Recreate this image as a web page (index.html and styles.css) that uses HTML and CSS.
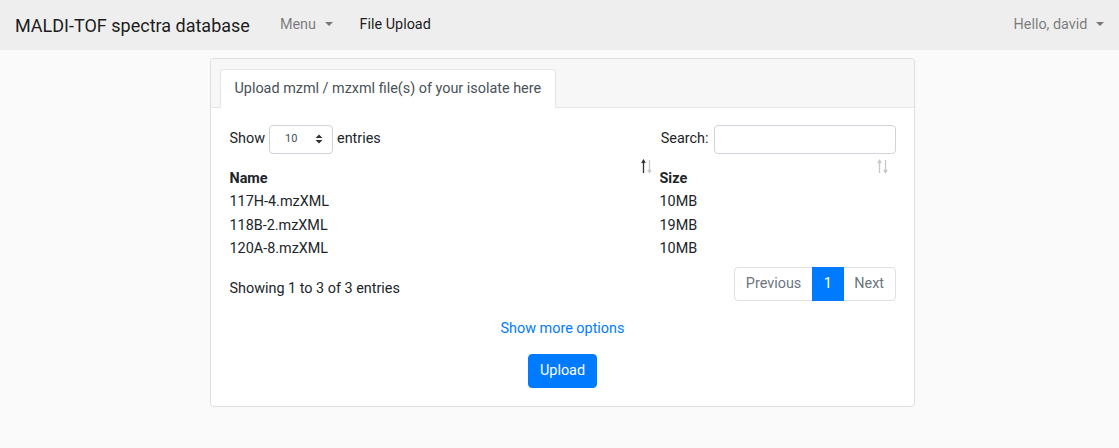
FILE: index.html
```html
<!DOCTYPE html>
<html>
<head>
<meta charset="utf-8">
<link rel="stylesheet" href="styles.css">
</head>
<body>
<nav class="navbar">
  <div class="brand">MALDI-TOF spectra database</div>
  <div class="nav-link muted dropdown">Menu <span class="caret"></span></div>
  <div class="nav-link active">File Upload</div>
  <div class="spacer"></div>
  <div class="nav-link muted dropdown">Hello, david <span class="caret"></span></div>
</nav>
<main class="wrap">
  <section class="card">
    <div class="card-header">
      <div class="tab">Upload mzml / mzxml file(s) of your isolate here</div>
    </div>
    <div class="card-body">
      <div class="dt-top">
        <label class="length">Show
          <span class="select">10 <svg class="updown" width="8" height="10" viewBox="0 0 8 10"><path d="M4 0.5 L7.5 4 H0.5 Z M4 9.5 L7.5 6 H0.5 Z" fill="#333"/></svg></span>
          entries</label>
        <label class="search">Search: <span class="input"></span></label>
      </div>
      <table class="tbl">
        <thead>
          <tr>
            <th class="c-name">Name<svg class="sort" width="12" height="15" viewBox="0 0 12 15"><path d="M2.5 1.5 V14 M0.8 4 L2.5 1.2 L4.2 4" stroke="#333" stroke-width="1.3" fill="none"/><path d="M8.5 1 V13.5 M6.8 10.8 L8.5 13.6 L10.2 10.8" stroke="#c8c8c8" stroke-width="1.3" fill="none"/></svg></th>
            <th class="c-size">Size<svg class="sort" width="12" height="15" viewBox="0 0 12 15"><path d="M2.5 1.5 V14 M0.8 4 L2.5 1.2 L4.2 4" stroke="#c8c8c8" stroke-width="1.3" fill="none"/><path d="M8.5 1 V13.5 M6.8 10.8 L8.5 13.6 L10.2 10.8" stroke="#c8c8c8" stroke-width="1.3" fill="none"/></svg></th>
          </tr>
        </thead>
        <tbody>
          <tr><td>117H-4.mzXML</td><td>10MB</td></tr>
          <tr><td>118B-2.mzXML</td><td>19MB</td></tr>
          <tr><td>120A-8.mzXML</td><td>10MB</td></tr>
        </tbody>
      </table>
      <div class="dt-bottom">
        <div class="info">Showing 1 to 3 of 3 entries</div>
        <div class="pager">
          <span class="pg">Previous</span><span class="pg cur">1</span><span class="pg">Next</span>
        </div>
      </div>
      <div class="more"><a>Show more options</a></div>
      <div class="actions"><button class="btn">Upload</button></div>
    </div>
  </section>
</main>
</body>
</html>
```

FILE: styles.css
```css
* { box-sizing: border-box; }
html, body { margin: 0; }
body {
  background: #fafafa;
  font-family: Roboto, "Noto Sans", sans-serif;
  font-size: 14.4px;
  color: #212529;
  line-height: 1.5;
}
.navbar {
  height: 50px;
  background: #eeeeee;
  display: flex;
  align-items: center;
  padding: 0 15px 0 15px;
}
.brand {
  font-size: 18px;
  color: rgba(0,0,0,.9);
  margin-right: 30px;
}
.nav-link {
  margin-right: 27px;
}
.nav-link.muted { color: rgba(0,0,0,.5); }
.nav-link.active { color: rgba(0,0,0,.9); }
.spacer { flex: 1; }
.nav-link:last-child { margin-right: 0; }
.caret {
  display: inline-block;
  width: 0; height: 0;
  margin-left: 5px;
  vertical-align: 3px;
  border-top: 4px solid rgba(0,0,0,.5);
  border-left: 4px solid transparent;
  border-right: 4px solid transparent;
}
.wrap {
  padding: 8px 0 0 5px;
  display: flex;
  justify-content: center;
}
.card {
  width: 705px;
  background: #fff;
  border: 1px solid #dfdfdf;
  border-radius: 4px;
}
.card-header {
  background: #f7f7f7;
  border-bottom: 1px solid #e6e6e6;
  padding: 10px 9px 0;
  display: flex;
  height: 49px;
  border-radius: 4px 4px 0 0;
}
.tab {
  background: #fff;
  border: 1px solid #e6e6e6;
  border-bottom: none;
  border-radius: 4px 4px 0 0;
  padding: 0 14px;
  height: 39px;
  margin-bottom: -1px;
  line-height: 37px;
  color: #495057;
}
.card-body {
  padding: 16px 18px 18px 19px;
}
.dt-top {
  display: flex;
  justify-content: space-between;
  align-items: center;
  height: 30px;
}
.length, .search { display: flex; align-items: center; }
.select {
  display: inline-flex;
  align-items: center;
  justify-content: space-between;
  width: 64px;
  height: 29px;
  margin: 0 4px;
  padding: 0 9px 0 15px;
  border: 1px solid #ced4da;
  border-radius: 4px;
  font-size: 11px;
  color: #495057;
}
.search .input {
  display: inline-block;
  width: 182px;
  height: 29px;
  margin-left: 5px;
  border: 1px solid #ced4da;
  border-radius: 4px;
}
.tbl {
  width: 100%;
  border-collapse: collapse;
}
.tbl th {
  text-align: left;
  font-weight: 700;
  padding: 0;
  position: relative;
  height: 36px;
  vertical-align: bottom;
  line-height: 22px;
}
.c-name { width: 430px; }
.tbl td {
  padding: 0;
  height: 23.5px;
  line-height: 23px;
}
.sort {
  position: absolute;
  right: 7px;
  top: 5px;
}
.c-size .sort { right: 7px; }
.dt-bottom {
  display: flex;
  justify-content: space-between;
  align-items: center;
  margin-top: 6px;
}
.info { padding-top: 11px; }
.pager {
  display: flex;
  border: 1px solid #dee2e6;
  border-radius: 4px;
  height: 34px;
}
.pg {
  padding: 0 10.5px;
  line-height: 32px;
  color: #6c757d;
}
.pg.cur {
  background: #007bff;
  color: #fff;
  margin: -1px 0;
  line-height: 34px;
  width: 32px;
  text-align: center;
  padding: 0;
}
.more {
  text-align: center;
  margin-top: 17px;
}
.more a { color: #007bff; }
.actions {
  text-align: center;
  margin-top: 15px;
}
.btn {
  font: inherit;
  background: #007bff;
  color: #fff;
  border: 1px solid #007bff;
  border-radius: 4px;
  height: 34px;
  width: 69px;
  padding: 0;
}
```
